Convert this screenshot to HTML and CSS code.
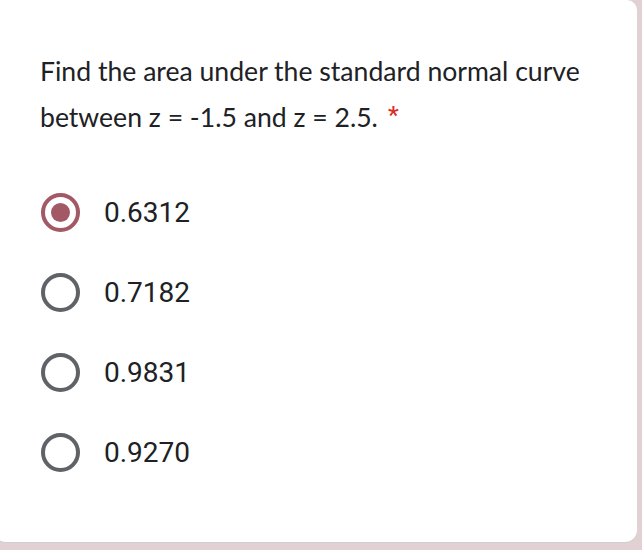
FILE: index.html
```html
<!DOCTYPE html>
<html>
<head>
<meta charset="utf-8">
<link rel="stylesheet" href="styles.css">
</head>
<body>
<div class="card">
  <div class="question">Find the area under the standard normal curve between z = -1.5 and z = 2.5.<span class="req">*</span></div>
  <div class="options">
    <div class="option"><span class="radio checked"><span class="dot"></span></span><span class="label">0.6312</span></div>
    <div class="option"><span class="radio"></span><span class="label">0.7182</span></div>
    <div class="option"><span class="radio"></span><span class="label">0.9831</span></div>
    <div class="option"><span class="radio"></span><span class="label">0.9270</span></div>
  </div>
</div>
</body>
</html>
```
FILE: styles.css
```css
html, body {
  margin: 0;
  padding: 0;
  background: #e2d1d3;
  width: 642px;
  height: 550px;
  overflow: hidden;
}
.card {
  box-sizing: border-box;
  margin-left: -6px;
  width: 643px;
  height: 542px;
  background: #ffffff;
  border-radius: 0 10px 12px 12px;
  box-shadow: 0 1px 1px #cfcfcf;
  padding: 48px 20px 0 46px;
}
.question {
  font-family: Lato, sans-serif;
  font-size: 26.6px;
  line-height: 46px;
  color: #202124;
  width: 570px;
}
.req {
  display: inline-block;
  font-family: Roboto, sans-serif;
  font-size: 24px;
  font-weight: 500;
  color: #d93025;
  margin-left: 10px;
  vertical-align: 4px;
  line-height: 20px;
}
.options {
  display: flex;
  flex-direction: column;
  margin-top: 32px;
}
.option {
  display: flex;
  align-items: center;
  height: 80px;
}
.radio {
  box-sizing: border-box;
  width: 39px;
  height: 39px;
  margin-left: 1px;
  border: 4px solid #5f6368;
  border-radius: 50%;
  display: flex;
  align-items: center;
  justify-content: center;
}
.radio.checked {
  border-color: #a35865;
}
.dot {
  width: 19px;
  height: 19px;
  border-radius: 50%;
  background: #a35865;
}
.label {
  font-family: Roboto, sans-serif;
  font-size: 28px;
  color: #202124;
  margin-left: 24px;
}
```
